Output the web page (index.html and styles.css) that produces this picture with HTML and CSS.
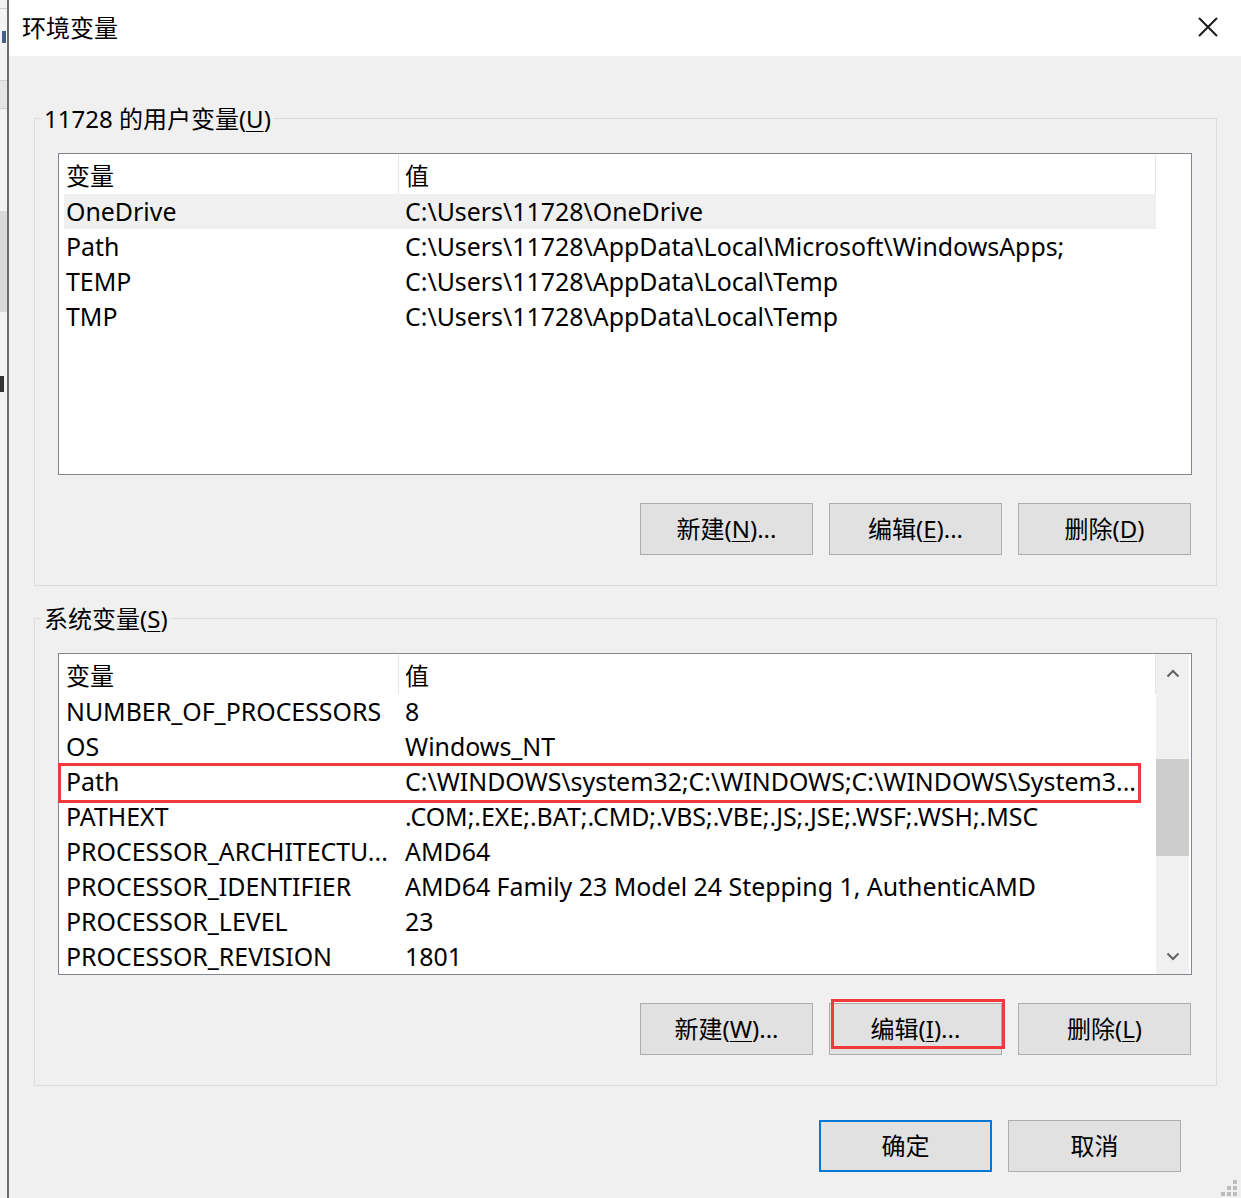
FILE: index.html
```html
<!DOCTYPE html>
<html lang="zh-CN">
<head>
<meta charset="utf-8">
<title>环境变量</title>
<link rel="stylesheet" href="styles.css">
</head>
<body>
<div class="screen">
  <div class="backwin">
    <div class="bw-gap1"></div>
    <div class="bw-line"></div>
    <div class="bw-gap2"></div>
    <div class="bw-frag"></div>
    <div class="bw-gap3"></div>
    <div class="bw-band"></div>
    <div class="bw-gap4"></div>
    <div class="bw-block"></div>
    <div class="bw-gap5"></div>
    <div class="bw-frag2"></div>
  </div>
  <div class="dialog">
    <div class="titlebar">
      <span class="title">环境变量</span>
      <svg class="close" width="20" height="20" viewBox="0 0 20 20"><path d="M1 1 L19 19 M19 1 L1 19" stroke="#1b1b1b" stroke-width="2" fill="none"/></svg>
    </div>
    <div class="content">
      <div class="group">
        <div class="group-title">11728 的用户变量(<u>U</u>)</div>
        <div class="list">
          <div class="list-body">
            <div class="row head"><div class="c1">变量</div><div class="c2">值</div></div>
            <div class="row hover"><div class="c1">OneDrive</div><div class="c2">C:\Users\11728\OneDrive</div></div>
            <div class="row"><div class="c1">Path</div><div class="c2">C:\Users\11728\AppData\Local\Microsoft\WindowsApps;</div></div>
            <div class="row"><div class="c1">TEMP</div><div class="c2">C:\Users\11728\AppData\Local\Temp</div></div>
            <div class="row"><div class="c1">TMP</div><div class="c2">C:\Users\11728\AppData\Local\Temp</div></div>
          </div>
          <div class="list-side"></div>
        </div>
        <div class="btns">
          <div class="btn">新建(<u>N</u>)...</div>
          <div class="btn">编辑(<u>E</u>)...</div>
          <div class="btn">删除(<u>D</u>)</div>
        </div>
      </div>

      <div class="group group2">
        <div class="group-title">系统变量(<u>S</u>)</div>
        <div class="list list2">
          <div class="list-body">
            <div class="row head"><div class="c1">变量</div><div class="c2">值</div></div>
            <div class="row"><div class="c1">NUMBER_OF_PROCESSORS</div><div class="c2">8</div></div>
            <div class="row"><div class="c1">OS</div><div class="c2">Windows_NT</div></div>
            <div class="row"><div class="c1">Path</div><div class="c2">C:\WINDOWS\system32;C:\WINDOWS;C:\WINDOWS\System3...</div></div>
            <div class="row"><div class="c1">PATHEXT</div><div class="c2">.COM;.EXE;.BAT;.CMD;.VBS;.VBE;.JS;.JSE;.WSF;.WSH;.MSC</div></div>
            <div class="row"><div class="c1">PROCESSOR_ARCHITECTU...</div><div class="c2">AMD64</div></div>
            <div class="row"><div class="c1">PROCESSOR_IDENTIFIER</div><div class="c2">AMD64 Family 23 Model 24 Stepping 1, AuthenticAMD</div></div>
            <div class="row"><div class="c1">PROCESSOR_LEVEL</div><div class="c2">23</div></div>
            <div class="row"><div class="c1">PROCESSOR_REVISION</div><div class="c2">1801</div></div>
          </div>
          <div class="scrollbar">
            <div class="sb-up"><svg width="14" height="9" viewBox="0 0 14 9"><path d="M1.5 7.5 L7 2 L12.5 7.5" stroke="#606060" stroke-width="2" fill="none"/></svg></div>
            <div class="sb-track"><div class="sb-thumb"></div></div>
            <div class="sb-down"><svg width="14" height="9" viewBox="0 0 14 9"><path d="M1.5 1.5 L7 7 L12.5 1.5" stroke="#606060" stroke-width="2" fill="none"/></svg></div>
          </div>
          <div class="mark mark-row"></div>
        </div>
        <div class="btns">
          <div class="btn">新建(<u>W</u>)...</div>
          <div class="btn">编辑(<u>I</u>)...<div class="mark mark-btn"></div></div>
          <div class="btn">删除(<u>L</u>)</div>
        </div>
      </div>

      <div class="footer">
        <div class="btn btn-default">确定</div>
        <div class="btn">取消</div>
      </div>
    </div>
    <div class="grip">
      <i style="right:4px;bottom:14px"></i>
      <i style="right:10px;bottom:8px"></i><i style="right:4px;bottom:8px"></i>
      <i style="right:16px;bottom:2px"></i><i style="right:10px;bottom:2px"></i><i style="right:4px;bottom:2px"></i>
    </div>
  </div>
</div>
</body>
</html>
```

FILE: styles.css
```css
html, body {
  margin: 0;
  padding: 0;
  background: #f0f0f0;
}
body {
  font-family: "Noto Sans", "Noto Sans CJK SC", sans-serif;
  font-size: 24px;
  color: #000;
}
.screen {
  display: flex;
  width: 1241px;
  height: 1198px;
  overflow: hidden;
}
.backwin {
  width: 7px;
  flex: none;
  background: #f3f3f3;
  border-right: 2px solid #6b6b6b;
  display: flex;
  flex-direction: column;
}
.bw-gap1 { height: 8px; }
.bw-line { height: 1px; background: #d0d0d0; }
.bw-gap2 { height: 22px; }
.bw-frag { height: 12px; margin-left: 2px; width: 4px; background: #44608a; }
.bw-gap3 { height: 37px; }
.bw-band { height: 27px; background: #e4e4e4; border-top: 1px solid #cfcfcf; border-bottom: 1px solid #cfcfcf; }
.bw-gap4 { height: 102px; }
.bw-block { height: 101px; background: #d9d9d9; }
.bw-gap5 { height: 64px; }
.bw-frag2 { height: 16px; width: 4px; background: #333; }

.dialog {
  position: relative;
  flex: 1;
  display: flex;
  flex-direction: column;
  background: #f0f0f0;
}
.titlebar {
  height: 56px;
  flex: none;
  background: #fff;
  display: flex;
  align-items: center;
  justify-content: space-between;
  padding: 0 23px 0 13px;
}
.title {
  line-height: 56px;
  font-size: 24px;
}
.close { display: block; margin-top: -2px; }

.content {
  padding: 62px 24px 0 25px;
  display: flex;
  flex-direction: column;
}
.group {
  border: 1px solid #dcdcdc;
  padding: 0 24px 30px 23px;
  display: flex;
  flex-direction: column;
}
.group2 { margin-top: 32px; }
.group-title {
  align-self: flex-start;
  margin: -15px 0 0 -17px;
  padding: 0 3px;
  height: 30px;
  line-height: 30px;
  background: #f0f0f0;
}
.list {
  position: relative;
  margin-top: 19px;
  height: 322px;
  box-sizing: border-box;
  border: 1px solid #828790;
  background: #fff;
  padding: 0 2px 0 5px;
  display: flex;
}
.list-body {
  width: 1092px;
  flex: none;
  display: flex;
  flex-direction: column;
  overflow: hidden;
}
.list-side { flex: 1; }
.row {
  display: flex;
  height: 35px;
  line-height: 35px;
  flex: none;
  white-space: nowrap;
  font-size: 24.9px;
}
.row.head {
  height: 40px;
  box-sizing: border-box;
  padding-top: 4px;
  font-size: 24px;
}
.c1 {
  width: 335px;
  box-sizing: border-box;
  padding-left: 2px;
  flex: none;
  overflow: hidden;
}
.c2 {
  flex: 1;
  padding-left: 6px;
  overflow: hidden;
}
.head .c1 { border-right: 1px solid #e5e5e5; margin-top: -3px; padding-top: 3px; }
.head .c2 { border-right: 1px solid #e5e5e5; margin-top: -3px; padding-top: 3px; }
.row.hover { background: #f0f0f0; }

.scrollbar {
  width: 33px;
  flex: none;
  background: #f0f0f0;
  display: flex;
  flex-direction: column;
}
.sb-up, .sb-down {
  display: flex;
  align-items: center;
  justify-content: center;
  flex: none;
}
.sb-up { height: 38px; }
.sb-down { height: 36px; }
.sb-track { flex: 1; }
.sb-thumb {
  margin-top: 67px;
  height: 97px;
  background: #cdcdcd;
}

.btns {
  display: flex;
  justify-content: flex-end;
  gap: 16px;
  margin-top: 28px;
  padding-right: 1px;
}
.btn {
  position: relative;
  width: 173px;
  height: 52px;
  box-sizing: border-box;
  background: #e1e1e1;
  border: 1px solid #adadad;
  display: flex;
  align-items: center;
  justify-content: center;
  font-size: 24px;
  line-height: 30px;
  white-space: nowrap;
}
u {
  text-decoration-thickness: 1px;
  text-underline-offset: 3px;
}
.footer {
  display: flex;
  justify-content: flex-end;
  gap: 16px;
  margin-top: 34px;
  padding-right: 36px;
}
.btn-default {
  border: 2px solid #0078d7;
}

.mark {
  position: absolute;
  box-sizing: border-box;
  border: 3px solid #f23a3a;
  pointer-events: none;
}
.mark-row {
  left: -1px;
  top: 109px;
  width: 1083px;
  height: 40px;
}
.mark-btn {
  left: 1px;
  top: -5px;
  width: 174px;
  height: 50px;
}

.grip i {
  position: absolute;
  width: 4px;
  height: 4px;
  background: #bdbdbd;
}
```
